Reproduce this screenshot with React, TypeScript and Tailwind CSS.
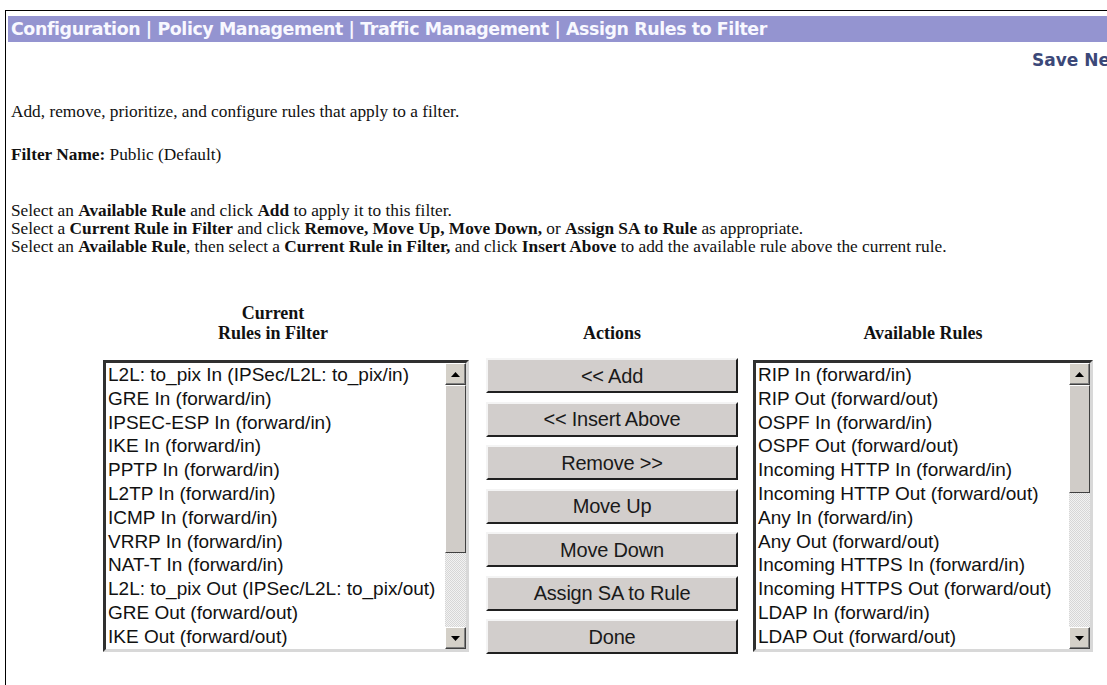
import React from 'react';

const currentRules = [
  'L2L: to_pix In (IPSec/L2L: to_pix/in)',
  'GRE In (forward/in)',
  'IPSEC-ESP In (forward/in)',
  'IKE In (forward/in)',
  'PPTP In (forward/in)',
  'L2TP In (forward/in)',
  'ICMP In (forward/in)',
  'VRRP In (forward/in)',
  'NAT-T In (forward/in)',
  'L2L: to_pix Out (IPSec/L2L: to_pix/out)',
  'GRE Out (forward/out)',
  'IKE Out (forward/out)',
];

const availableRules = [
  'RIP In (forward/in)',
  'RIP Out (forward/out)',
  'OSPF In (forward/in)',
  'OSPF Out (forward/out)',
  'Incoming HTTP In (forward/in)',
  'Incoming HTTP Out (forward/out)',
  'Any In (forward/in)',
  'Any Out (forward/out)',
  'Incoming HTTPS In (forward/in)',
  'Incoming HTTPS Out (forward/out)',
  'LDAP In (forward/in)',
  'LDAP Out (forward/out)',
];

const actions = ['<< Add', '<< Insert Above', 'Remove >>', 'Move Up', 'Move Down', 'Assign SA to Rule', 'Done'];

function ArrowButton({ dir }: { dir: 'up' | 'down' }) {
  return (
    <div className="flex h-[22px] w-[21px] shrink-0 items-center justify-center border border-t-white border-l-white border-r-[#404040] border-b-[#404040] bg-[#d4d0c8] shadow-[inset_-1px_-1px_0_#808080]">
      <svg width="9" height="5" viewBox="0 0 9 5">
        {dir === 'up' ? <path d="M4.5 0L9 5H0z" fill="#000" /> : <path d="M0 0H9L4.5 5z" fill="#000" />}
      </svg>
    </div>
  );
}

function ListBox({ items, width, thumb }: { items: string[]; width: string; thumb: string }) {
  return (
    <div className={`mt-[2px] flex h-[292px] ${width} border-[3px] border-t-[#303030] border-l-[#303030] border-r-[#d8d8d8] border-b-[#d8d8d8] bg-white`}>
      <div className="flex-1 overflow-hidden pl-[2px] font-['Liberation_Sans',Arial,sans-serif] text-[19px] leading-[23.8px] text-[#111]">
        {items.map((item) => (
          <div key={item} className="whitespace-nowrap">{item}</div>
        ))}
      </div>
      {/* scrollbar */}
      <div className="flex w-[21px] flex-col bg-[repeating-conic-gradient(#f2f2f2_0_25%,#d6d6d6_0_50%)] bg-[length:2px_2px]">
        <ArrowButton dir="up" />
        <div className={`${thumb} border border-t-white border-l-white border-r-[#404040] border-b-[#404040] bg-[#d0ccc8]`} />
        <div className="flex-1" />
        <ArrowButton dir="down" />
      </div>
    </div>
  );
}

export default function App() {
  return (
    <div className="h-[685px] w-[1107px] overflow-hidden bg-white">
      <div className="ml-[5px] mt-[10px] h-[700px] w-[1180px] border-l border-t border-black pl-[2px] pt-[5px]">
        {/* breadcrumb bar */}
        <div className="flex h-[26px] items-center bg-[#9494d0] pl-[3px] font-['DejaVu_Sans',Verdana,sans-serif] text-[17.4px] font-bold tracking-[-0.4px] text-[#f8f8ff]">
          Configuration | Policy Management | Traffic Management | Assign Rules to Filter
        </div>
        <div className="mt-[9px] pl-[1024px] font-['DejaVu_Sans',Verdana,sans-serif] text-[17px] font-bold leading-[18px] text-[#3b4878] whitespace-nowrap">
          Save Needed
        </div>

        <div className="pl-[3px] font-['Liberation_Serif','Times_New_Roman',serif] text-[17.3px] leading-[18px] text-[#111]">
          <p className="mt-[34px]">Add, remove, prioritize, and configure rules that apply to a filter.</p>
          <p className="mt-[25px]">
            <b>Filter Name:</b> Public (Default)
          </p>
          <div className="mt-[38px]">
            <p>
              Select an <b>Available Rule</b> and click <b>Add</b> to apply it to this filter.
            </p>
            <p>
              Select a <b>Current Rule in Filter</b> and click <b>Remove, Move Up, Move Down,</b> or{' '}
              <b>Assign SA to Rule</b> as appropriate.
            </p>
            <p>
              Select an <b>Available Rule</b>, then select a <b>Current Rule in Filter,</b> and click{' '}
              <b>Insert Above</b> to add the available rule above the current rule.
            </p>
          </div>
        </div>

        {/* rule editor */}
        <div className="mt-[47px] flex pl-[95px]">
          <div className="flex w-[366px] flex-col">
            <div className="h-[40px] pr-[26px] text-center font-['Liberation_Serif','Times_New_Roman',serif] text-[18px] font-bold leading-[20px] text-[#111]">
              Current
              <br />
              Rules in Filter
            </div>
            <div className="mt-[15px]">
              <ListBox items={currentRules} width="w-[366px]" thumb="h-[168px]" />
            </div>
          </div>

          <div className="ml-[17px] flex w-[252px] flex-col">
            <div className="flex h-[40px] items-end justify-center font-['Liberation_Serif','Times_New_Roman',serif] text-[18px] font-bold leading-[20px] text-[#111]">
              Actions
            </div>
            <div className="mt-[15px] flex h-[296px] flex-col justify-between">
              {actions.map((a) => (
                <button
                  key={a}
                  className="h-[35px] w-full border-2 border-t-[#f4f4f4] border-l-[#f4f4f4] border-r-[#202020] border-b-[#202020] bg-[#d2cecc] font-['Liberation_Sans',Arial,sans-serif] text-[20px] tracking-[-0.2px] text-[#1a1a1a]"
                >
                  {a}
                </button>
              ))}
            </div>
          </div>

          <div className="ml-[15px] flex w-[340px] flex-col">
            <div className="flex h-[40px] items-end justify-center font-['Liberation_Serif','Times_New_Roman',serif] text-[18px] font-bold leading-[20px] text-[#111]">
              Available Rules
            </div>
            <div className="mt-[15px]">
              <ListBox items={availableRules} width="w-[340px]" thumb="h-[108px]" />
            </div>
          </div>
        </div>
      </div>
    </div>
  );
}
